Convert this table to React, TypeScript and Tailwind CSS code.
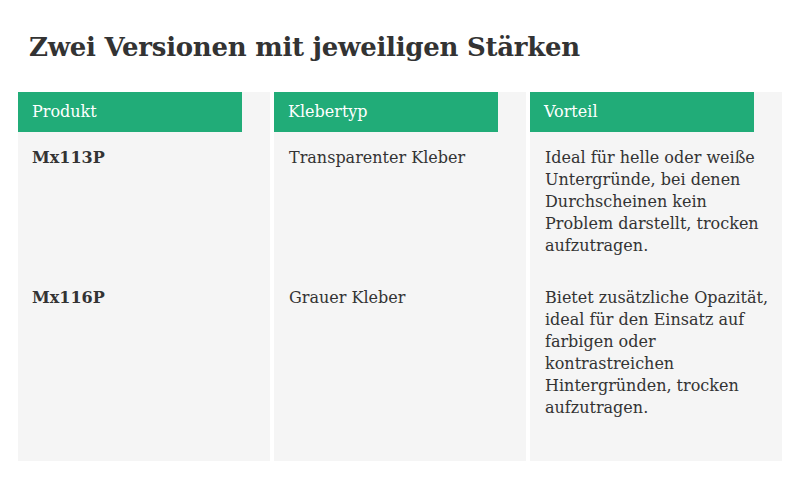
import React from "react";

const rows = [
  {
    product: "Mx113P",
    type: "Transparenter Kleber",
    benefit: ["Ideal für helle oder weiße", "Untergründe, bei denen", "Durchscheinen kein", "Problem darstellt, trocken", "aufzutragen."],
  },
  {
    product: "Mx116P",
    type: "Grauer Kleber",
    benefit: ["Bietet zusätzliche Opazität,", "ideal für den Einsatz auf", "farbigen oder", "kontrastreichen", "Hintergründen, trocken", "aufzutragen."],
  },
];

const headers = ["Produkt", "Klebertyp", "Vorteil"];

export default function App() {
  return (
    <div className="w-[800px] h-[480px] bg-white text-[#333333] font-['DejaVu_Serif',serif]">
      <div className="pl-[29px] pt-[31px]">
        <h1 className="text-[26px] leading-[32px] font-bold tracking-[-0.01em]">
          Zwei Versionen mit jeweiligen Stärken
        </h1>
      </div>

      <div className="mt-[29px] ml-[18px] w-[764px] grid grid-cols-3 gap-x-[4px]">
        {/* header */}
        {headers.map((h) => (
          <div key={h} className="bg-[#f5f5f5]">
            <div className="w-[224px] h-[40px] bg-[#21ac78] text-white text-[16px] flex items-center pl-[14px]">
              {h}
            </div>
          </div>
        ))}

        {/* rows */}
        {rows.map((r, i) => (
          <React.Fragment key={r.product}>
            <div className={`bg-[#f5f5f5] pl-[14px] pt-[15px] text-[16px] leading-[22px] font-bold ${i === rows.length - 1 ? "pb-[42px]" : "pb-[15px]"}`}>
              {r.product}
            </div>
            <div className={`bg-[#f5f5f5] pl-[15px] pt-[15px] text-[16px] leading-[22px] ${i === rows.length - 1 ? "pb-[42px]" : "pb-[15px]"}`}>
              {r.type}
            </div>
            <div className={`bg-[#f5f5f5] pl-[15px] pt-[15px] text-[16px] leading-[22px] whitespace-nowrap ${i === rows.length - 1 ? "pb-[42px]" : "pb-[15px]"}`}>
              {r.benefit.map((line) => (
                <div key={line}>{line}</div>
              ))}
            </div>
          </React.Fragment>
        ))}
      </div>
    </div>
  );
}
